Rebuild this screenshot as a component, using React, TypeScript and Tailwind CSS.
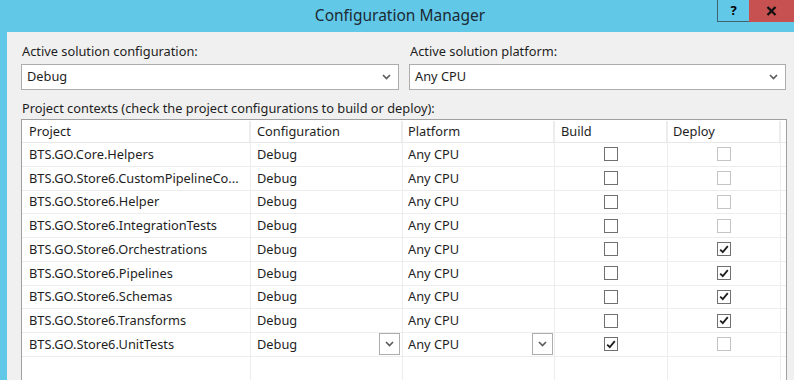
import React from "react";

interface Row {
  project: string;
  build: boolean;
  deploy: boolean;
  deployEnabled: boolean;
  editing?: boolean;
}

const rows: Row[] = [
  { project: "BTS.GO.Core.Helpers", build: false, deploy: false, deployEnabled: false },
  { project: "BTS.GO.Store6.CustomPipelineCo...", build: false, deploy: false, deployEnabled: false },
  { project: "BTS.GO.Store6.Helper", build: false, deploy: false, deployEnabled: false },
  { project: "BTS.GO.Store6.IntegrationTests", build: false, deploy: false, deployEnabled: false },
  { project: "BTS.GO.Store6.Orchestrations", build: false, deploy: true, deployEnabled: true },
  { project: "BTS.GO.Store6.Pipelines", build: false, deploy: true, deployEnabled: true },
  { project: "BTS.GO.Store6.Schemas", build: false, deploy: true, deployEnabled: true },
  { project: "BTS.GO.Store6.Transforms", build: false, deploy: true, deployEnabled: true },
  { project: "BTS.GO.Store6.UnitTests", build: true, deploy: false, deployEnabled: false, editing: true },
];

function Chevron() {
  return (
    <svg width="9" height="6" viewBox="0 0 9 6" className="shrink-0">
      <path d="M1 1 L4.5 4.5 L8 1" fill="none" stroke="#5a5a5a" strokeWidth="1.6" />
    </svg>
  );
}

function Combo({ value }: { value: string }) {
  return (
    <div className="h-[26px] bg-white border border-[#acacac] flex items-center justify-between pl-[5px] pr-[7px]">
      <span className="text-[12.8px] text-[#1e1e1e]">{value}</span>
      <Chevron />
    </div>
  );
}

function Checkbox({ checked, enabled }: { checked: boolean; enabled: boolean }) {
  return (
    <div
      className={`w-[14px] h-[14px] bg-white border flex items-center justify-center ${
        enabled ? "border-[#707070]" : "border-[#c4c4c4]"
      }`}
    >
      {checked && (
        <svg width="10" height="9" viewBox="0 0 10 9">
          <path d="M1.2 4.6 L3.8 7.2 L8.8 1.2" fill="none" stroke="#1e1e1e" strokeWidth="1.8" />
        </svg>
      )}
    </div>
  );
}

function DropButton() {
  return (
    <div className="w-[21px] h-[22px] bg-white border border-[#adadad] flex items-center justify-center">
      <Chevron />
    </div>
  );
}

const cols = "grid grid-cols-[229px_152px_152px_113px_113px_1fr]";

export default function App() {
  return (
    <div className="w-[794px] h-[380px] overflow-hidden bg-[#62c8e8] flex flex-col font-['Noto_Sans','Open_Sans',sans-serif] text-[#1e1e1e]">
      {/* title bar */}
      <div className="relative h-[32px] shrink-0 flex items-center justify-center">
        <span className="text-[15.5px] text-[#1b2a33] mt-[-1px] ml-[6px]">Configuration Manager</span>
        <div className="absolute top-0 right-0 flex">
          <div className="w-[32px] h-[22px] border-l border-b border-[#40616f] flex items-center justify-center text-[13px] font-bold text-black">
            ?
          </div>
          <div className="w-[45px] h-[22px] bg-[#c75050] flex items-center justify-center">
            <svg width="11" height="10" viewBox="0 0 11 10">
              <path d="M1.5 1 L9.5 9 M9.5 1 L1.5 9" stroke="#111" strokeWidth="2.4" />
            </svg>
          </div>
        </div>
      </div>

      {/* client area */}
      <div className="flex-1 ml-[7px] bg-[#f0f0f0] pl-[14px] pr-[7px] pt-[9px] flex flex-col">
        <div className="grid grid-cols-[378px_377px] gap-x-[10px]">
          <div>
            <div className="text-[12.8px] h-[21px] leading-[21px] pl-px mb-[2px]">Active solution configuration:</div>
            <Combo value="Debug" />
          </div>
          <div>
            <div className="text-[12.8px] h-[21px] leading-[21px] pl-px mb-[2px]">Active solution platform:</div>
            <Combo value="Any CPU" />
          </div>
        </div>

        <div className="text-[12.8px] mt-[8px] h-[21px] leading-[21px] pl-px">
          Project contexts (check the project configurations to build or deploy):
        </div>

        <div className="w-[766px] flex-1 bg-white border-t border-l border-r border-[#a0a0a0] pt-px">
          {/* header */}
          <div className={`${cols} h-[22px] border-b border-[#e8e8e8] text-[12.8px]`}>
            <div className="pl-[7px] leading-[21px] border-r-2 border-[#ececec]">Project</div>
            <div className="pl-[6px] leading-[21px] border-r-2 border-[#ececec]">Configuration</div>
            <div className="pl-[5px] leading-[21px] border-r-2 border-[#ececec]">Platform</div>
            <div className="pl-[6px] leading-[21px] border-r-2 border-[#ececec]">Build</div>
            <div className="pl-[5px] leading-[21px] border-r-2 border-[#ececec]">Deploy</div>
            <div />
          </div>

          {rows.map((r) => (
            <div key={r.project} className={`${cols} h-[23.75px] border-b border-[#ededed] text-[12.8px]`}>
              <div className="pl-[7px] flex items-center border-r border-[#ededed] whitespace-nowrap">{r.project}</div>
              <div className="pl-[6px] pr-[2px] flex items-center justify-between border-r border-[#ededed]">
                <span>Debug</span>
                {r.editing && <DropButton />}
              </div>
              <div className="pl-[5px] pr-[1px] flex items-center justify-between border-r border-[#ededed]">
                <span>Any CPU</span>
                {r.editing && <DropButton />}
              </div>
              <div className="flex items-center justify-center border-r border-[#ededed] pr-px">
                <Checkbox checked={r.build} enabled />
              </div>
              <div className="flex items-center justify-center border-r border-[#ededed] pr-px">
                <Checkbox checked={r.deploy} enabled={r.deployEnabled} />
              </div>
              <div />
            </div>
          ))}

          <div className={`${cols} h-[40px]`}>
            <div className="border-r border-[#ededed]" />
            <div className="border-r border-[#ededed]" />
            <div className="border-r border-[#ededed]" />
            <div className="border-r border-[#ededed]" />
            <div className="border-r border-[#ededed]" />
            <div />
          </div>
        </div>
      </div>
    </div>
  );
}
